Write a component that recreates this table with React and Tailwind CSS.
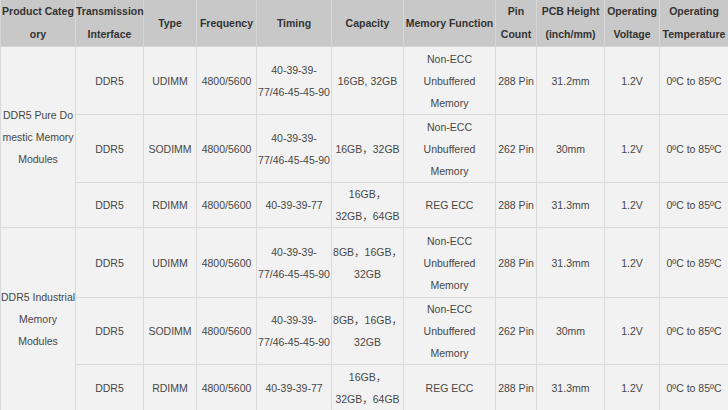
import React from 'react';

const cols = [75, 68, 53, 60, 75, 72, 92, 41, 68, 55, 69];

const headers = [
  ['Product Categ', 'ory'],
  ['Transmission', 'Interface'],
  ['Type'],
  ['Frequency'],
  ['Timing'],
  ['Capacity'],
  ['Memory Function'],
  ['Pin', 'Count'],
  ['PCB Height', '(inch/mm)'],
  ['Operating', 'Voltage'],
  ['Operating', 'Temperature'],
];

const groups = [
  {
    name: ['DDR5 Pure Do', 'mestic Memory', 'Modules'],
    rows: [
      { h: 'h-[68px]', type: 'UDIMM', timing: ['40-39-39-', '77/46-45-45-90'], cap: ['16GB, 32GB'], fn: ['Non-ECC', 'Unbuffered', 'Memory'], pin: '288 Pin', pcb: '31.2mm' },
      { h: 'h-[68px]', type: 'SODIMM', timing: ['40-39-39-', '77/46-45-45-90'], cap: ['16GB，32GB'], fn: ['Non-ECC', 'Unbuffered', 'Memory'], pin: '262 Pin', pcb: '30mm' },
      { h: 'h-[45px]', type: 'RDIMM', timing: ['40-39-39-77'], cap: ['16GB，', '32GB，64GB'], fn: ['REG ECC'], pin: '288 Pin', pcb: '31.3mm' },
    ],
  },
  {
    name: ['DDR5 Industrial', 'Memory', 'Modules'],
    rows: [
      { h: 'h-[70px]', type: 'UDIMM', timing: ['40-39-39-', '77/46-45-45-90'], cap: ['8GB，16GB，', '32GB'], fn: ['Non-ECC', 'Unbuffered', 'Memory'], pin: '288 Pin', pcb: '31.3mm' },
      { h: 'h-[66px]', type: 'SODIMM', timing: ['40-39-39-', '77/46-45-45-90'], cap: ['8GB，16GB，', '32GB'], fn: ['Non-ECC', 'Unbuffered', 'Memory'], pin: '262 Pin', pcb: '30mm' },
      { h: 'h-[46px]', type: 'RDIMM', timing: ['40-39-39-77'], cap: ['16GB，', '32GB，64GB'], fn: ['REG ECC'], pin: '288 Pin', pcb: '31.3mm' },
    ],
  },
];

const Lines = ({ lines }) =>
  lines.map((l, i) => (
    <div key={i} className="whitespace-nowrap">
      {l}
    </div>
  ));

const Td = ({ children, rowSpan }) => (
  <td rowSpan={rowSpan} className="border border-[#dadada] px-0 py-0 text-center align-middle">
    {children}
  </td>
);

export default function App() {
  return (
    <div className="w-[728px] h-[410px] overflow-hidden bg-[#f2f2f2] font-['Liberation_Sans','Noto_Sans_CJK_SC',Arial,sans-serif] text-[10.5px] leading-[22px] text-[#474747]">
      <table className="table-fixed border-collapse w-[728px]">
        <colgroup>
          {cols.map((w, i) => (
            <col key={i} style={{ width: w }} />
          ))}
        </colgroup>
        <thead>
          <tr className="h-[45px] bg-[#c8c8c8]">
            {headers.map((h, i) => (
              <th key={i} className="border border-[#d6d6d6] border-t-0 px-0 py-0 text-center align-middle font-bold leading-[23px] text-[#333]">
                <Lines lines={h} />
              </th>
            ))}
          </tr>
        </thead>
        <tbody>
          {groups.map((g, gi) =>
            g.rows.map((r, ri) => (
              <tr key={gi + '-' + ri} className={r.h}>
                {ri === 0 && (
                  <Td rowSpan={3}>
                    <Lines lines={g.name} />
                  </Td>
                )}
                <Td>DDR5</Td>
                <Td>{r.type}</Td>
                <Td>4800/5600</Td>
                <Td>
                  <Lines lines={r.timing} />
                </Td>
                <Td>
                  <Lines lines={r.cap} />
                </Td>
                <Td>
                  <Lines lines={r.fn} />
                </Td>
                <Td>{r.pin}</Td>
                <Td>{r.pcb}</Td>
                <Td>1.2V</Td>
                <Td>0ºC to 85ºC</Td>
              </tr>
            ))
          )}
        </tbody>
      </table>
    </div>
  );
}
